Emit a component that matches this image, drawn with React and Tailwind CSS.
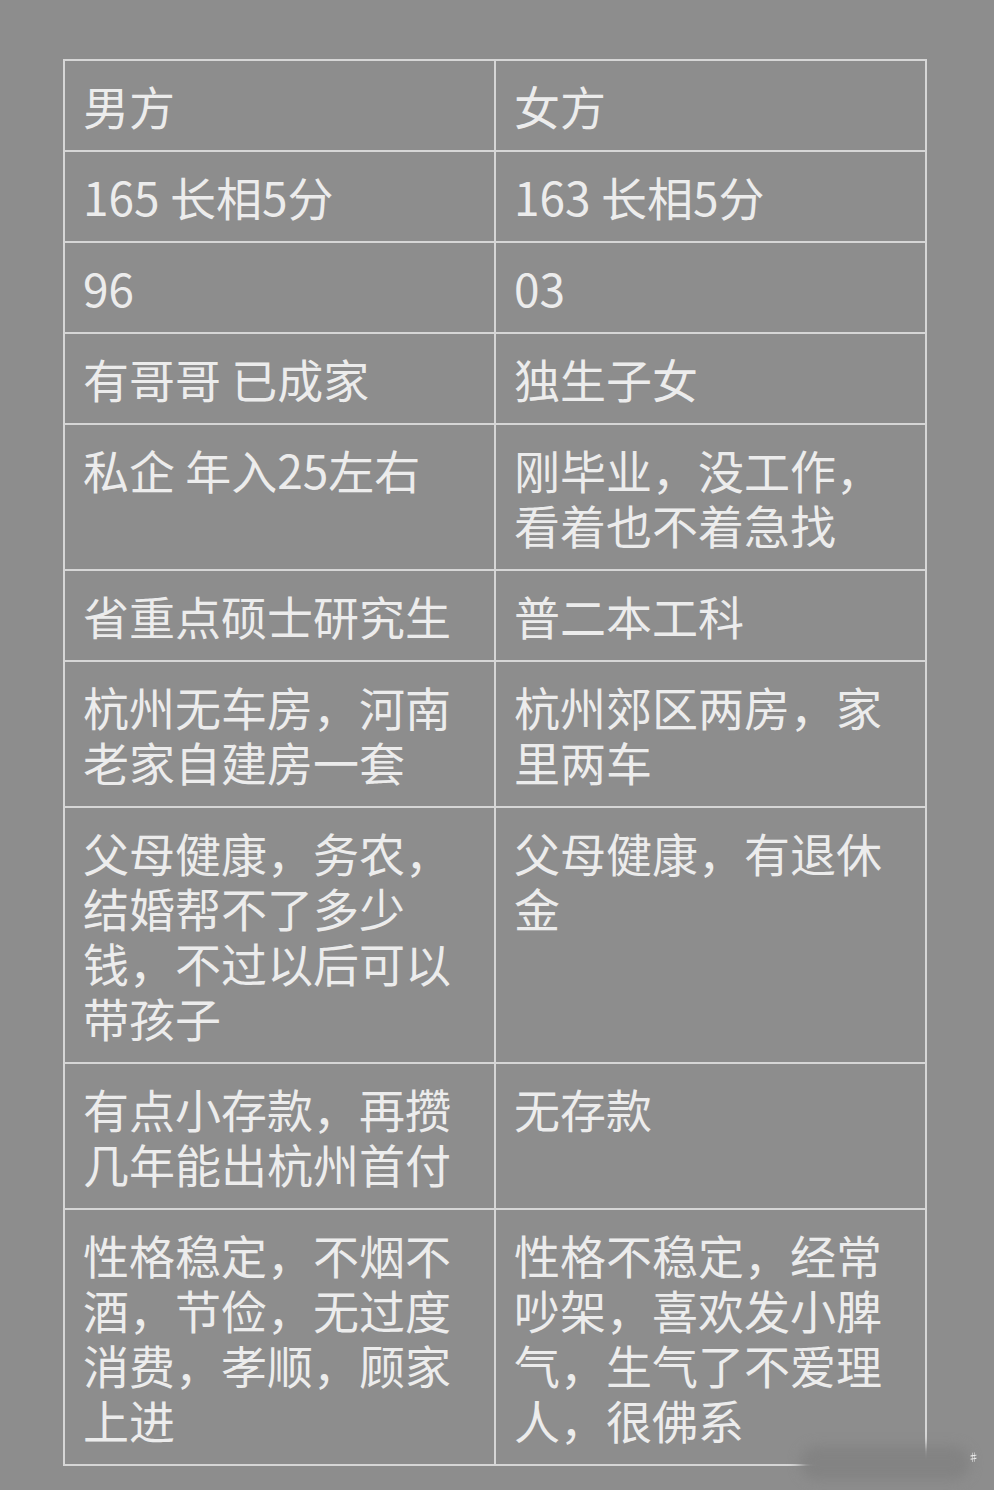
import React from "react";

const rows = [
  ["男方", "女方"],
  ["165 长相5分", "163 长相5分"],
  ["96", "03"],
  ["有哥哥 已成家", "独生子女"],
  ["私企 年入25左右", "刚毕业，没工作，看着也不着急找"],
  ["省重点硕士研究生", "普二本工科"],
  ["杭州无车房，河南老家自建房一套", "杭州郊区两房，家里两车"],
  ["父母健康，务农，结婚帮不了多少钱，不过以后可以带孩子", "父母健康，有退休金"],
  ["有点小存款，再攒几年能出杭州首付", "无存款"],
  ["性格稳定，不烟不酒，节俭，无过度消费，孝顺，顾家上进", "性格不稳定，经常吵架，喜欢发小脾气，生气了不爱理人，很佛系"],
];

export default function App() {
  return (
    <div
      className="relative w-[994px] h-[1490px] bg-[#8d8d8d] overflow-hidden"
      style={{ fontFamily: '"Noto Sans CJK SC", "Noto Sans", sans-serif' }}
    >
      <div className="pt-[59px] pl-[63px]">
        <table className="border-collapse table-fixed w-[862px] text-[#ececec] text-[46px] leading-[55px]">
          <colgroup>
            <col className="w-[431px]" />
            <col className="w-[431px]" />
          </colgroup>
          <tbody>
            {rows.map((r, i) => (
              <tr key={i}>
                {r.map((c, j) => (
                  <td
                    key={j}
                    className="border-2 border-[#d6d6d6] align-top pl-[18px] pr-[12px] py-[17px] break-all"
                  >
                    {c}
                  </td>
                ))}
              </tr>
            ))}
          </tbody>
        </table>
      </div>
      <div className="absolute left-[800px] top-[1446px] w-[170px] h-[34px] bg-[#838383] blur-[6px] rounded-full" />
      <div className="absolute left-[968px] top-[1452px] text-[11px] leading-[11px] text-[#f2f2f2] blur-[0.5px]">
        ♯
      </div>
    </div>
  );
}
